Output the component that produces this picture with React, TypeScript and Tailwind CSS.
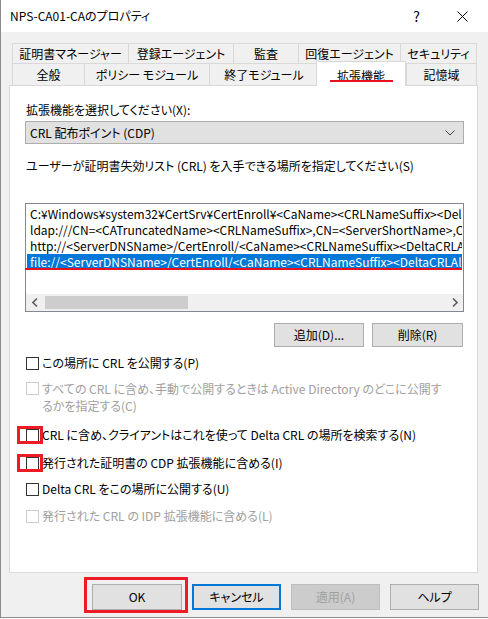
import type { ReactNode } from 'react'

const row1 = [
  { label: '証明書マネージャー', w: 116 },
  { label: '登録エージェント', w: 105 },
  { label: '監査', w: 65 },
  { label: '回復エージェント', w: 102 },
  { label: 'セキュリティ', w: 77 },
]

const row2 = [
  { label: '全般', w: 72 },
  { label: 'ポリシー モジュール', w: 125 },
  { label: '終了モジュール', w: 109 },
  { label: '拡張機能', w: 88, active: true },
  { label: '記憶域', w: 71 },
]

const paths = [
  'C:¥Windows¥system32¥CertSrv¥CertEnroll¥<CaName><CRLNameSuffix><DeltaCRLAllowed>.crl',
  'ldap:///CN=<CATruncatedName><CRLNameSuffix>,CN=<ServerShortName>,CN=CDP,CN=Public Key Services',
  'http://<ServerDNSName>/CertEnroll/<CaName><CRLNameSuffix><DeltaCRLAllowed>.crl',
  'file://<ServerDNSName>/CertEnroll/<CaName><CRLNameSuffix><DeltaCRLAllowed>.crl',
]

export default function App() {
  return (
    <div className="relative w-[488px] h-[618px] bg-[#f0f0f0] border-l border-b border-[#8c8c8c] overflow-hidden text-[12px] text-black font-['Noto_Sans_CJK_JP',sans-serif] [font-feature-settings:'palt']">
      {/* title bar */}
      <div className="h-[32px] bg-white flex items-center pl-[9px]">
        <span className="leading-none">NPS-CA01-CAのプロパティ</span>
        <span className="ml-auto mr-[37px] text-[14px] leading-none">?</span>
        <svg width="11" height="11" viewBox="0 0 11 11" className="mr-[20px]">
          <path d="M0.5 0.5 L10.5 10.5 M10.5 0.5 L0.5 10.5" stroke="#000" strokeWidth="1" />
        </svg>
      </div>

      {/* tabs */}
      <div className="pt-[11px] pl-[11px]">
        <div className="flex h-[20px]">
          {row1.map((t, i) => (
            <div
              key={t.label}
              style={{ width: t.w }}
              className={
                'flex items-center justify-center border-t border-l border-[#d9d9d9] ' +
                (i === row1.length - 1 ? 'border-r' : '')
              }
            >
              {t.label}
            </div>
          ))}
        </div>
        <div className="flex h-[22px]">
          {row2.map((t, i) =>
            t.active ? (
              <div
                key={t.label}
                style={{ width: t.w + 2 }}
                className="relative z-10 -ml-[2px] -mt-[2px] h-[25px] flex items-start pt-[5px] justify-center bg-white border-t border-l border-r border-[#d9d9d9]"
              >
                {t.label}
              </div>
            ) : (
              <div
                key={t.label}
                style={{ width: t.w }}
                className={
                  'flex items-center justify-center border-t border-l border-[#d9d9d9] ' +
                  (i === row2.length - 1 ? 'border-r' : '')
                }
              >
                {t.label}
              </div>
            )
          )}
        </div>
      </div>

      {/* panel */}
      <div className="ml-[8px] w-[469px] h-[488px] bg-white border border-[#d9d9d9] px-[15px] flex flex-col">
        <div className="mt-[16px] h-[16px] leading-[16px] pl-[1px]">拡張機能を選択してください(X):</div>
        <div className="mt-[3px] h-[23px] w-[439px] bg-[#e1e1e1] border border-[#adadad] flex items-center pl-[4px] pr-[8px]">
          <span>CRL 配布ポイント (CDP)</span>
          <svg width="10" height="6" viewBox="0 0 10 6" className="ml-auto">
            <path d="M0.5 0.5 L5 5 L9.5 0.5" stroke="#444" fill="none" strokeWidth="1" />
          </svg>
        </div>
        <div className="mt-[14px] h-[16px] leading-[16px] pl-[1px]">
          ユーザーが証明書失効リスト (CRL) を入手できる場所を指定してください(S)
        </div>

        {/* list */}
        <div className="mt-[29px] h-[109px] w-[439px] border border-[#828790] bg-white flex flex-col">
          <div className="h-[90px] pt-[2px] px-[1px] overflow-hidden">
            {paths.map((p, i) => (
              <div
                key={p}
                className={
                  'h-[16px] leading-[16px] whitespace-nowrap overflow-hidden pl-[3px] ' +
                  (i === 3 ? 'bg-[#0078d7] text-white' : '')
                }
              >
                {p}
              </div>
            ))}
          </div>
          <div className="mt-auto h-[17px] bg-[#f0f0f0] flex items-center">
            <div className="w-[17px] flex justify-center">
              <svg width="6" height="9" viewBox="0 0 6 9">
                <path d="M5 0.5 L1 4.5 L5 8.5" stroke="#606060" fill="none" strokeWidth="1.6" />
              </svg>
            </div>
            <div className="w-[143px] h-[13px] bg-[#cdcdcd] ml-[2px]" />
            <div className="ml-auto w-[17px] flex justify-center">
              <svg width="6" height="9" viewBox="0 0 6 9">
                <path d="M1 0.5 L5 4.5 L1 8.5" stroke="#606060" fill="none" strokeWidth="1.6" />
              </svg>
            </div>
          </div>
        </div>

        <div className="mt-[11px] h-[24px] w-[439px] flex justify-end gap-[8px] pr-[1px]">
          <Btn w="w-[90px]">追加(D)...</Btn>
          <Btn w="w-[91px]">削除(R)</Btn>
        </div>

        <Check className="mt-[8px]">この場所に CRL を公開する(P)</Check>
        <div className="mt-[9px] flex gap-[3px] pl-[1px] text-[#a0a0a0]">
          <div className="mt-[2px] w-[13px] h-[13px] border border-[#cccccc] bg-white shrink-0" />
          <div className="leading-[17px]">
            <div>すべての CRL に含め、手動で公開するときは Active Directory のどこに公開す</div>
            <div>るかを指定する(C)</div>
          </div>
        </div>
        <Check className="mt-[13px]" marked>
          CRL に含め、クライアントはこれを使って Delta CRL の場所を検索する(N)
        </Check>
        <Check className="mt-[12px]" marked>
          発行された証明書の CDP 拡張機能に含める(I)
        </Check>
        <Check className="mt-[10px]">Delta CRL をこの場所に公開する(U)</Check>
        <Check className="mt-[11px]" disabled>
          発行された CRL の IDP 拡張機能に含める(L)
        </Check>
      </div>

      {/* dialog buttons */}
      <div className="mt-[11px] h-[26px] flex pl-[91px] gap-[10px]">
        <Btn w="w-[90px]">OK</Btn>
        <Btn w="w-[89px]" focused>
          キャンセル
        </Btn>
        <Btn w="w-[89px]" disabled>
          適用(A)
        </Btn>
        <Btn w="w-[89px]">ヘルプ</Btn>
      </div>

      {/* annotations */}
      <div className="absolute left-[329px] top-[80px] w-[63px] h-[2px] bg-[#e8101c] z-20" />
      <div className="absolute left-[24px] top-[268px] w-[436px] h-[2px] bg-[#e8101c]" />
      <div className="absolute left-[83px] top-[577px] w-[104px] h-[36px] border-[3px] border-[#ed1c24]" />
    </div>
  )
}

function Btn({
  children,
  w,
  focused,
  disabled,
}: {
  children: ReactNode
  w: string
  focused?: boolean
  disabled?: boolean
}) {
  let cls = 'bg-[#e1e1e1] border border-[#adadad]'
  if (focused) cls = 'bg-[#e1e1e1] border-2 border-[#0078d7]'
  if (disabled) cls = 'bg-[#cccccc] border border-[#bfbfbf] text-[#a0a0a0]'
  return <div className={`${w} h-full flex items-center justify-center ${cls}`}>{children}</div>
}

function Check({
  children,
  className,
  marked,
  disabled,
}: {
  children: ReactNode
  className?: string
  marked?: boolean
  disabled?: boolean
}) {
  return (
    <div className={`relative h-[16px] flex items-center gap-[3px] pl-[1px] ${disabled ? 'text-[#a0a0a0]' : ''} ${className ?? ''}`}>
      <div className={`w-[13px] h-[13px] bg-white border shrink-0 ${disabled ? 'border-[#cccccc]' : 'border-[#333333]'}`} />
      <span className="leading-[16px] whitespace-nowrap">{children}</span>
      {marked && (
        <div className="absolute -left-[8px] -top-[1px] w-[26px] h-[18px] border-[3px] border-[#ed1c24]" />
      )}
    </div>
  )
}
